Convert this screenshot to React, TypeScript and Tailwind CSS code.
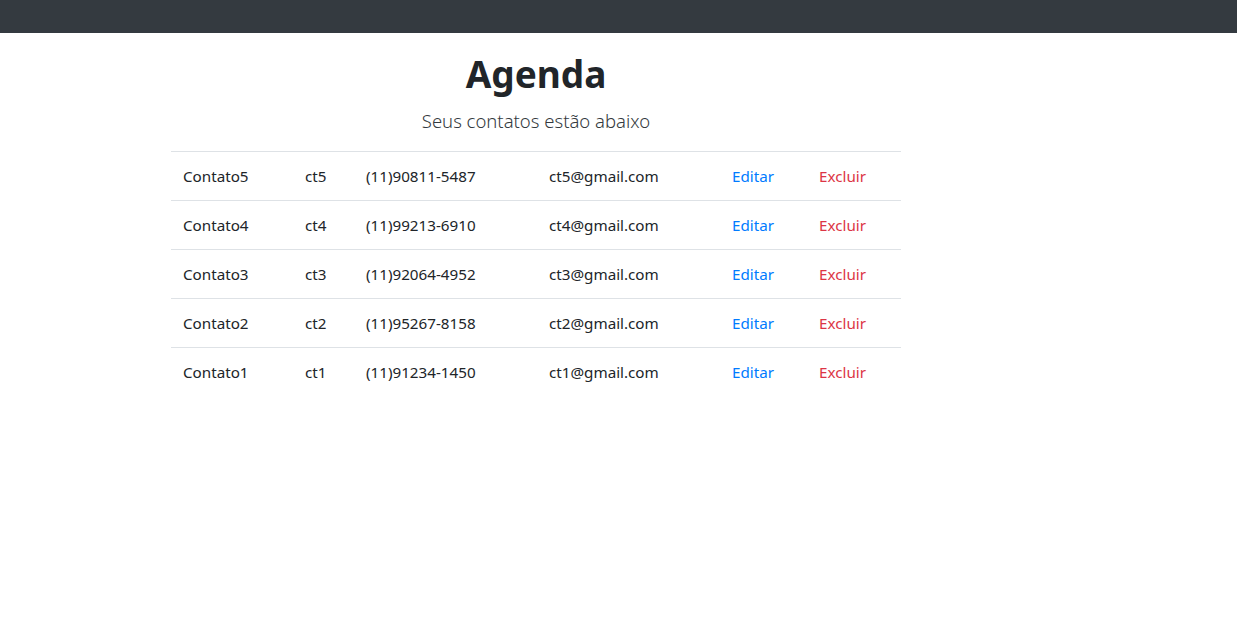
const contatos = [
	{ nome: "Contato5", apelido: "ct5", telefone: "(11)90811-5487", email: "ct5@gmail.com" },
	{ nome: "Contato4", apelido: "ct4", telefone: "(11)99213-6910", email: "ct4@gmail.com" },
	{ nome: "Contato3", apelido: "ct3", telefone: "(11)92064-4952", email: "ct3@gmail.com" },
	{ nome: "Contato2", apelido: "ct2", telefone: "(11)95267-8158", email: "ct2@gmail.com" },
	{ nome: "Contato1", apelido: "ct1", telefone: "(11)91234-1450", email: "ct1@gmail.com" },
];

export default function App() {
	return (
		<div className="min-h-screen bg-white text-[#212529] font-['Noto_Sans',sans-serif]">
			<nav className="h-[33px] bg-[#343a40]" />
			<div className="w-[730px] ml-[171px]">
				<h1 className="mt-[17px] text-center text-[37px] leading-[48px] font-bold">Agenda</h1>
				<p className="mt-[8px] text-center text-[18.5px] leading-[30px] font-light text-[#343a40]">
					Seus contatos estão abaixo
				</p>
				<table className="mt-[15px] w-full table-fixed border-collapse text-[15.2px]">
					<colgroup>
						<col className="w-[122px]" />
						<col className="w-[61px]" />
						<col className="w-[183px]" />
						<col className="w-[183px]" />
						<col className="w-[87px]" />
						<col className="w-[94px]" />
					</colgroup>
					<tbody>
						{contatos.map((c) => (
							<tr key={c.nome} className="border-t border-[#dee2e6] h-[49px]">
								<td className="px-3">{c.nome}</td>
								<td className="px-3">{c.apelido}</td>
								<td className="px-3">{c.telefone}</td>
								<td className="px-3">{c.email}</td>
								<td className="px-3 text-[#007bff]">Editar</td>
								<td className="px-3 text-[#dc3545]">Excluir</td>
							</tr>
						))}
					</tbody>
				</table>
			</div>
		</div>
	);
}
